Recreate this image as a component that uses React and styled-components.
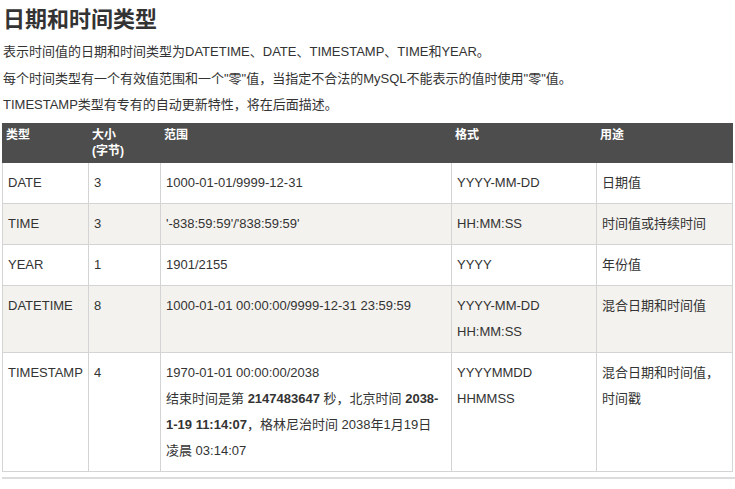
import React from "react";
import styled, { createGlobalStyle } from "styled-components";

const Global = createGlobalStyle`
  html, body { margin: 0; padding: 0; background: #fff; }
  body {
    font-family: "Liberation Sans", Arial, "Noto Sans CJK SC", sans-serif;
    color: #333;
    font-size: 13px;
  }
`;

const Page = styled.div`
  padding: 0 3px 0 2px;
  width: 735px;
  box-sizing: border-box;
`;

const Title = styled.h2`
  margin: 0;
  padding-left: 1px;
  font-size: 22px;
  line-height: 39px;
  font-weight: bold;
  color: #333;
`;

const Para = styled.p`
  margin: 0;
  padding-left: 1px;
  font-size: 13px;
  line-height: 26.5px;
  color: #333;
`;

const Table = styled.table`
  margin-top: 4px;
  width: 730px;
  border-collapse: collapse;
  table-layout: fixed;
  font-size: 13px;
`;

const Th = styled.th`
  background: #4d4d4d;
  color: #fff;
  border: 1px solid #4d4d4d;
  font-size: 12px;
  line-height: 16px;
  padding: 3px;
  text-align: left;
  vertical-align: top;
  font-weight: bold;
`;

const Row = styled.tr`
  background: ${(p) => (p.$alt ? "#f3f2ee" : "#fff")};
`;

const Td = styled.td`
  border: 1px solid #d4d4d4;
  padding: 7px 5px;
  line-height: 26px;
  vertical-align: top;
  color: #333;
  word-wrap: break-word;
`;

const Rule = styled.hr`
  margin: 5px 0 0 0;
  border: 0;
  border-top: 2px solid #dcdcdc;
  width: 735px;
`;

const rows = [
  ["DATE", "3", "1000-01-01/9999-12-31", "YYYY-MM-DD", "日期值"],
  ["TIME", "3", "'-838:59:59'/'838:59:59'", "HH:MM:SS", "时间值或持续时间"],
  ["YEAR", "1", "1901/2155", "YYYY", "年份值"],
  [
    "DATETIME",
    "8",
    "1000-01-01 00:00:00/9999-12-31 23:59:59",
    <>YYYY-MM-DD<br />HH:MM:SS</>,
    "混合日期和时间值",
  ],
  [
    "TIMESTAMP",
    "4",
    <>
      1970-01-01 00:00:00/2038
      <br />
      结束时间是第 <b>2147483647</b> 秒，北京时间 <b>2038-1-19 11:14:07</b>，格林尼治时间 2038年1月19日 凌晨 03:14:07
    </>,
    <>YYYYMMDD<br />HHMMSS</>,
    <>混合日期和时间值，<br />时间戳</>,
  ],
];

export default function App() {
  return (
    <Page>
      <Global />
      <Title>日期和时间类型</Title>
      <Para>表示时间值的日期和时间类型为DATETIME、DATE、TIMESTAMP、TIME和YEAR。</Para>
      <Para>每个时间类型有一个有效值范围和一个"零"值，当指定不合法的MySQL不能表示的值时使用"零"值。</Para>
      <Para>TIMESTAMP类型有专有的自动更新特性，将在后面描述。</Para>
      <Table>
        <colgroup>
          <col style={{ width: 86 }} />
          <col style={{ width: 72 }} />
          <col style={{ width: 291 }} />
          <col style={{ width: 145 }} />
          <col style={{ width: 136 }} />
        </colgroup>
        <thead>
          <tr>
            <Th>类型</Th>
            <Th>大小<br />(字节)</Th>
            <Th>范围</Th>
            <Th>格式</Th>
            <Th>用途</Th>
          </tr>
        </thead>
        <tbody>
          {rows.map((r, i) => (
            <Row key={i} $alt={i % 2 === 1}>
              {r.map((c, j) => (
                <Td key={j}>{c}</Td>
              ))}
            </Row>
          ))}
        </tbody>
      </Table>
      <Rule />
    </Page>
  );
}
